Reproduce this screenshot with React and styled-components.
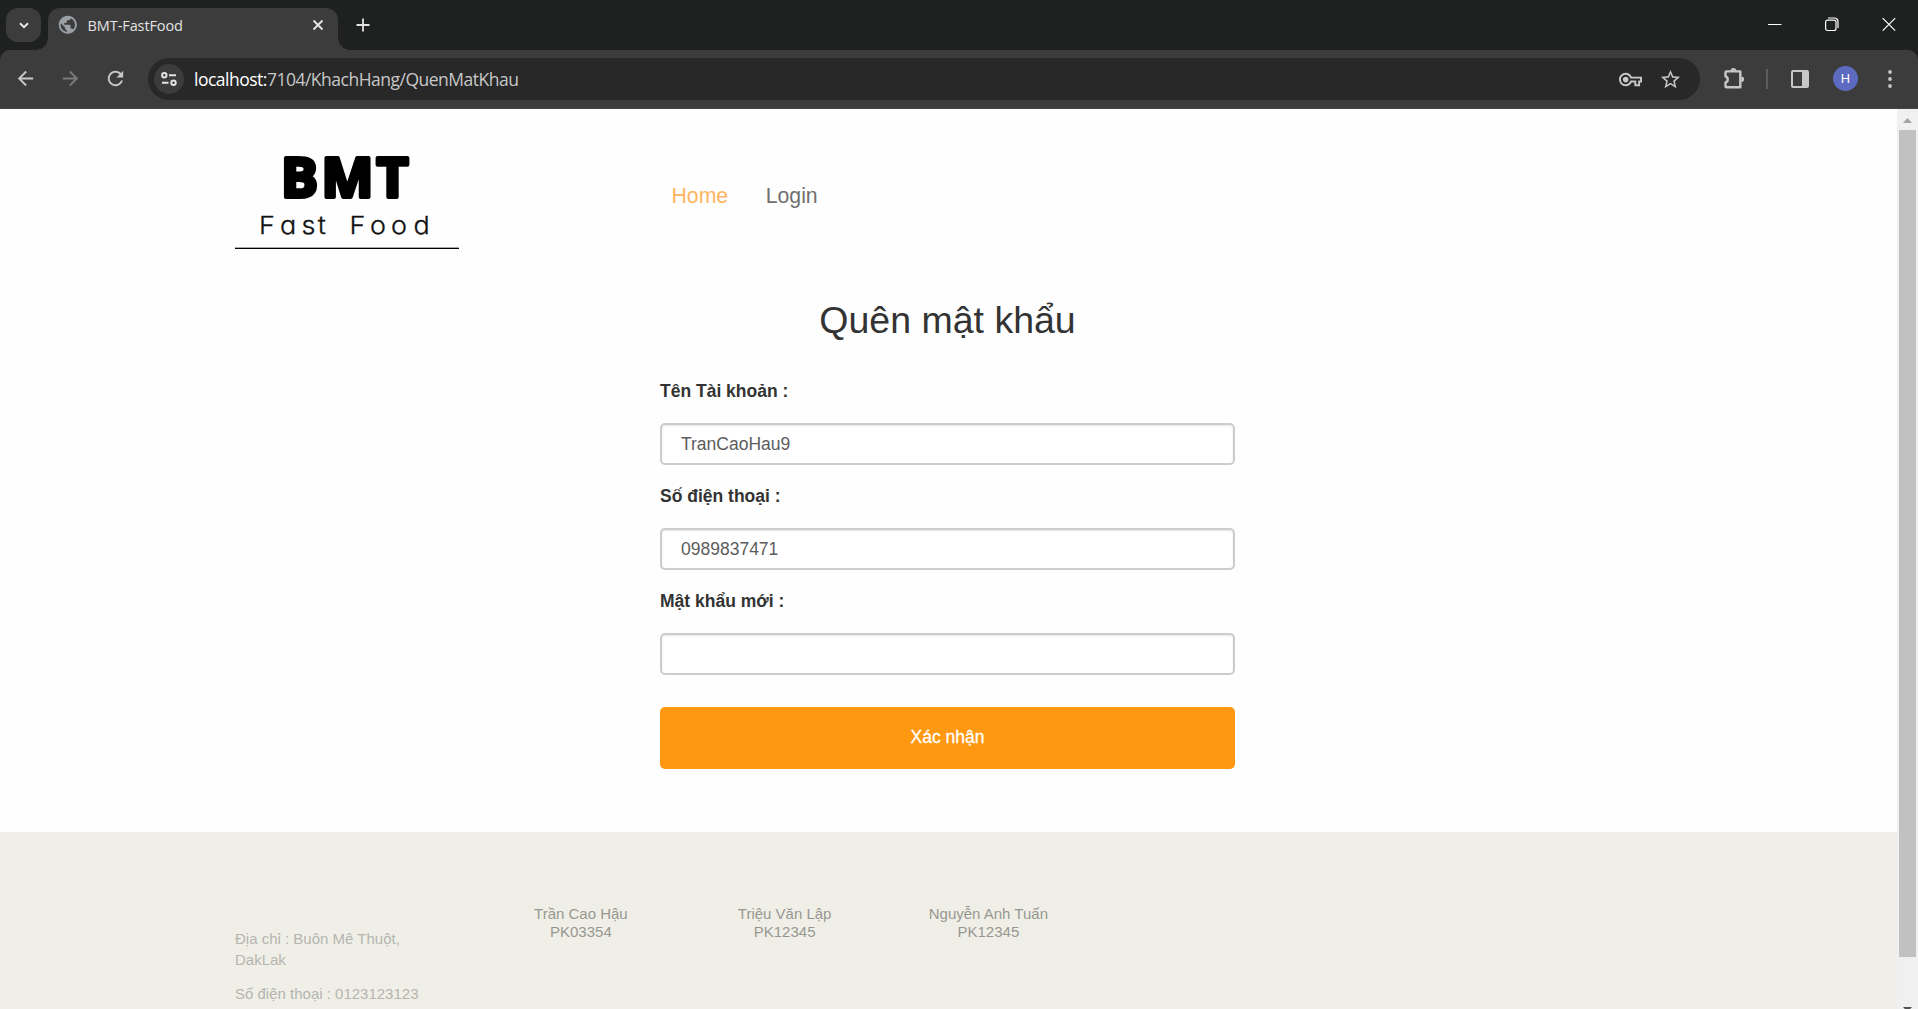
import React from "react";
import styled, { createGlobalStyle } from "styled-components";

const GlobalStyle = createGlobalStyle`
  * { box-sizing: border-box; }
  html, body { margin: 0; padding: 0; overflow: hidden; }
  body { background: #fff; }
`;

const Window = styled.div`
  display: flex;
  flex-direction: column;
  width: 1918px;
  height: 1009px;
  overflow: hidden;
  font-family: "Liberation Sans", Arial, sans-serif;
`;

const TabStrip = styled.div`
  display: flex;
  flex: none;
  height: 50px;
  padding: 8px 0 0 6px;
  background: #1f2120;
  color: #e3e3e3;
`;

const TabSearch = styled.button`
  display: flex;
  align-items: center;
  justify-content: center;
  width: 35px;
  height: 34px;
  margin: 0 7px 0 0;
  padding: 0;
  border: 0;
  border-radius: 12px;
  background: #3c3c3c;
  color: #e8e8e8;
`;

const Tab = styled.div`
  position: relative;
  display: flex;
  align-items: center;
  width: 290px;
  height: 42px;
  padding: 0 13px 8px 9px;
  border-radius: 12px 12px 0 0;
  background: #3c3c3c;
  &::before,
  &::after {
    content: "";
    position: absolute;
    bottom: 0;
    width: 12px;
    height: 12px;
  }
  &::before {
    left: -12px;
    background: radial-gradient(circle at 0 0, transparent 11.5px, #3c3c3c 12px);
  }
  &::after {
    right: -12px;
    background: radial-gradient(circle at 100% 0, transparent 11.5px, #3c3c3c 12px);
  }
`;

const TabTitle = styled.span`
  flex: 1;
  margin-left: 9px;
  padding-top: 1px;
  font: 14.5px/20px "Open Sans", sans-serif;
  letter-spacing: -0.1px;
  color: #e3e3e3;
`;

const NewTab = styled.div`
  display: flex;
  width: 14px;
  margin: 10px 0 0 18px;
`;

const WindowControls = styled.div`
  display: flex;
  gap: 43px;
  margin: 9px 22px 0 auto;
  color: #fff;
`;

const ToolbarBack = styled.div`
  flex: none;
  background: #1f2120;
`;

const Toolbar = styled.div`
  display: flex;
  align-items: center;
  height: 59px;
  padding: 0 16px 1px 14px;
  border-radius: 10px 10px 0 0;
  border-bottom: 1px solid #474444;
  background: #3c3c3c;
  color: #c7c7c7;
`;

const NavButtons = styled.div`
  display: flex;
  gap: 22px;
  width: 134px;
`;

const AddressBar = styled.div`
  display: flex;
  align-items: center;
  width: 1552px;
  height: 42px;
  padding: 0 18px 0 6px;
  border-radius: 21px;
  background: #282828;
`;

const SiteInfo = styled.div`
  display: flex;
  align-items: center;
  justify-content: center;
  width: 30px;
  height: 30px;
  border-radius: 50%;
  background: #3c3c3c;
  color: #e3e3e3;
`;

const Url = styled.div`
  flex: 1;
  margin-left: 10px;
  padding-top: 1px;
  font: 17.5px/24px "Open Sans", sans-serif;
  letter-spacing: -0.5px;
  color: #c7c7c7;
  b { font-weight: 400; color: #fff; }
`;

const AddressIcons = styled.div`
  display: flex;
  align-items: center;
  gap: 17px;
  padding-top: 1px;
`;

const ToolbarActions = styled.div`
  display: flex;
  flex: 1;
  align-items: center;
  padding-left: 22px;
`;

const Divider = styled.i`
  width: 2px;
  height: 20px;
  margin: 0 23px 0 20px;
  background: #5c5d5e;
`;

const Avatar = styled.div`
  width: 25px;
  height: 25px;
  margin: 0 30px 0 24px;
  border-radius: 50%;
  background: #5c6bc0;
  font: 13px/25px Roboto, sans-serif;
  text-align: center;
  color: #fff;
`;

const Viewport = styled.div`
  display: flex;
  flex: 1;
  min-height: 0;
`;

const Page = styled.div`
  display: flex;
  flex-direction: column;
  width: 1897px;
  background: #fefefe;
`;

const Header = styled.header`
  display: flex;
  flex: none;
  height: 181px;
  padding: 30px 0 0 235px;
`;

const Logo = styled.a`
  width: 224px;
  height: 110px;
  border-bottom: 1px solid #000;
  box-shadow: inset 0 -1px #a9a9a9;
  svg { display: block; }
`;

const Nav = styled.nav`
  display: flex;
  gap: 37.5px;
  padding: 44px 0 0 212.5px;
`;

const NavLink = styled.a`
  font-size: 21.25px;
  line-height: 26px;
  color: ${(p) => (p.$active ? "#ffb560" : "#70706e")};
`;

const Form = styled.form`
  display: flex;
  flex: none;
  flex-direction: column;
  width: 575px;
  height: 542px;
  margin-left: 660px;
`;

const Title = styled.h2`
  margin: 9px 0 38px;
  font-size: 37.5px;
  line-height: 42px;
  font-weight: 400;
  text-align: center;
  color: #333;
`;

const Field = styled.label`
  display: flex;
  flex-direction: column;
  height: 105px;
`;

const FieldName = styled.span`
  height: 44px;
  padding-top: 2px;
  font-size: 17.5px;
  line-height: 20px;
  font-weight: 700;
  color: #333;
`;

const Input = styled.input`
  width: 100%;
  height: 42px;
  padding: 0 19px;
  border: 2px solid #ccc;
  border-radius: 5px;
  outline: 0;
  background: #fff;
  box-shadow: inset 0 1px 2px rgba(0, 0, 0, 0.1);
  font: 17.5px/24px "Liberation Sans", Arial, sans-serif;
  color: #5c5c5c;
`;

const Submit = styled.button`
  height: 62px;
  margin-top: 13px;
  padding: 0 0 2px;
  border: 0;
  border-radius: 5px;
  background: #ff9811;
  font: 17.5px/24px "Liberation Sans", Arial, sans-serif;
  -webkit-text-stroke: 0.3px #fff;
  color: #fff;
`;

const Footer = styled.footer`
  display: flex;
  flex: 1;
  padding: 73px 0 0 235px;
  background: #f0efe7;
  font-size: 15px;
`;

const Contact = styled.address`
  width: 244px;
  padding-top: 23px;
  font-style: normal;
  line-height: 21px;
  color: #b5b5b0;
  p { width: 190px; margin: 0 0 13px; }
`;

const Member = styled.div`
  width: 203.75px;
  line-height: 18px;
  text-align: center;
  color: #979791;
`;

const Scrollbar = styled.div`
  display: flex;
  flex-direction: column;
  align-items: center;
  width: 21px;
  background: #f0f0f0;
`;

const Thumb = styled.div`
  flex: none;
  width: 17px;
  height: 827px;
  margin: 7px 0 50px;
  background: #c1c1c1;
`;

const Arrow = styled.svg`
  flex: none;
  display: block;
  margin-top: ${(p) => p.$top || 0}px;
`;

const Svg = styled.svg`
  flex: none;
  display: block;
`;

const Glyph = ({ size, d, color = "currentColor" }) => (
  <Svg width={size} height={size} viewBox="0 0 24 24" fill={color}>
    <path d={d} />
  </Svg>
);

const paths = {
  back: "M20 11H7.83l5.59-5.59L12 4l-8 8 8 8 1.41-1.41L7.83 13H20v-2z",
  forward: "M12 4l-1.41 1.41L16.17 11H4v2h12.17l-5.58 5.59L12 20l8-8z",
  reload:
    "M17.65 6.35C16.2 4.9 14.21 4 12 4c-4.42 0-7.99 3.58-7.99 8s3.57 8 7.99 8c3.73 0 6.84-2.55 7.73-6h-2.08c-.82 2.33-3.04 4-5.65 4-3.31 0-6-2.69-6-6s2.69-6 6-6c1.66 0 3.14.69 4.22 1.78L13 11h7V4l-2.35 2.35z",
  globe:
    "M12 2C6.48 2 2 6.48 2 12s4.48 10 10 10 10-4.48 10-10S17.52 2 12 2zm-1 17.93c-3.95-.49-7-3.85-7-7.93 0-.62.08-1.21.21-1.79L9 15v1c0 1.1.9 2 2 2v1.93zm6.9-2.54c-.26-.81-1-1.39-1.9-1.39h-1v-3c0-.55-.45-1-1-1H8v-2h2c.55 0 1-.45 1-1V7h2c1.1 0 2-.9 2-2v-.41c2.93 1.19 5 4.06 5 7.41 0 2.08-.8 3.97-2.1 5.39z",
  key: "M22 19h-6v-4h-2.68c-1.14 2.42-3.6 4-6.32 4-3.86 0-7-3.14-7-7s3.14-7 7-7c2.72 0 5.17 1.58 6.32 4H24v6h-2v4zm-4-2h2v-4h2v-2H11.94l-.23-.67C11.01 8.34 9.11 7 7 7c-2.76 0-5 2.24-5 5s2.24 5 5 5c2.11 0 4.01-1.34 4.71-3.33l.23-.67H18v4zM7 15c-1.65 0-3-1.35-3-3s1.35-3 3-3 3 1.35 3 3-1.35 3-3 3z",
  star: "M22 9.24l-7.19-.62L12 2 9.19 8.63 2 9.24l5.46 4.73L5.82 21 12 17.27 18.18 21l-1.63-7.03L22 9.24zM12 15.4l-3.76 2.27 1-4.28-3.32-2.88 4.38-.38L12 6.1l1.71 4.04 4.38.38-3.32 2.88 1 4.28L12 15.4z",
};

const Mark = ({ w, h, children, sw = 2 }) => (
  <Svg width={w} height={h} viewBox={`0 0 ${w} ${h}`} fill="none" stroke="currentColor" strokeWidth={sw}>
    {children}
  </Svg>
);

const brand = [
  ["B", 281, 37],
  ["M", 321.5, 52],
  ["T", 376.5, 32],
];

const BrandLogo = () => (
  <svg width="224" height="108" viewBox="235 139 224 108">
    <g fontFamily="Open Sans, sans-serif" fontWeight="700" fontSize="54.5" fill="#000" stroke="#000" strokeWidth="4" strokeLinejoin="round">
      {brand.map(([ch, x, w]) => (
        <text key={ch} x={x} y="197" textLength={w} lengthAdjust="spacingAndGlyphs">{ch}</text>
      ))}
    </g>
    <text
      transform="translate(259 234) scale(1.1 1)"
      x="0 19.1 38.6 53.5 68 82.3 101 120 140.500"
      y="0"
      fontFamily="Inter, sans-serif"
      fontWeight="300"
      fontSize="24.500"
      fill="#111"
      stroke="#111"
      strokeWidth=".3"
      style={{ fontFeatureSettings: '"cv11"' }}
    >
      Fast Food
    </text>
  </svg>
);

const members = [
  ["Trần Cao Hậu", "PK03354"],
  ["Triệu Văn Lập", "PK12345"],
  ["Nguyễn Anh Tuấn", "PK12345"],
];

export default function App() {
  return (
    <Window>
      <GlobalStyle />
      <TabStrip>
        <TabSearch>
          <Mark w={10} h={7}><path d="M1 1.2l4 4 4-4" /></Mark>
        </TabSearch>
        <Tab>
          <Glyph size={21.6} d={paths.globe} color="#9aa0a6" />
          <TabTitle>BMT-FastFood</TabTitle>
          <Mark w={14} h={14} sw={1.9}><path d="M2.5 2.5l9 9M11.5 2.5l-9 9" /></Mark>
        </Tab>
        <NewTab>
          <Mark w={14} h={14} sw={1.8}><path d="M7 .5v13M.5 7h13" /></Mark>
        </NewTab>
        <WindowControls>
          <Mark w={14} h={14} sw={1}><path d="M0 7.5h13.5" /></Mark>
          <Mark w={14} h={15} sw={1.2}>
            <rect x=".6" y="3.1" width="10.4" height="10.4" rx="2" />
            <path d="M3 1h6.5a3.5 3.5 0 0 1 3.5 3.5V11" />
          </Mark>
          <Mark w={14} h={15} sw={1.2}><path d="M.7 1.2l12.5 12.5M13.2 1.2L.7 13.7" /></Mark>
        </WindowControls>
      </TabStrip>
      <ToolbarBack>
        <Toolbar>
          <NavButtons>
            <Glyph size={23} d={paths.back} />
            <Glyph size={23} d={paths.forward} color="#7a7a7a" />
            <Glyph size={23} d={paths.reload} />
          </NavButtons>
          <AddressBar>
            <SiteInfo>
              <Mark w={16} h={14}>
                <circle cx="3.3" cy="3.3" r="2.2" />
                <path d="M8 3.3h7M1 10.7h6.5" />
                <circle cx="12.5" cy="10.7" r="2.2" />
              </Mark>
            </SiteInfo>
            <Url><b>localhost:</b>7104/KhachHang/QuenMatKhau</Url>
            <AddressIcons>
              <Glyph size={23} d={paths.key} />
              <Glyph size={23} d={paths.star} />
            </AddressIcons>
          </AddressBar>
          <ToolbarActions>
            <Mark w={24} h={24} sw={2.4}>
              <path d="M4.5 4.400H18.300V20.200H4.500a1 1 0 0 1-1-1v-3.900a3 3 0 0 0 0-5.800V5.400a1 1 0 0 1 1-1" strokeLinejoin="round" />
              <path d="M8.500 3.800a2.900 2.900 0 0 1 5.800 0zM19.300 9.500a2.800 2.800 0 0 1 0 5.600z" fill="currentColor" stroke="none" />
            </Mark>
            <Divider />
            <Mark w={18} h={18}>
              <rect x="1" y="1" width="16" height="16" rx="1" />
              <path d="M11 1h6v16h-6z" fill="currentColor" stroke="none" />
            </Mark>
            <Avatar>H</Avatar>
            <Mark w={4} h={18}>
              <g fill="currentColor" stroke="none">
                <circle cx="2" cy="2" r="1.9" />
                <circle cx="2" cy="9" r="1.9" />
                <circle cx="2" cy="16" r="1.9" />
              </g>
            </Mark>
          </ToolbarActions>
        </Toolbar>
      </ToolbarBack>
      <Viewport>
        <Page>
          <Header>
            <Logo><BrandLogo /></Logo>
            <Nav>
              <NavLink $active>Home</NavLink>
              <NavLink>Login</NavLink>
            </Nav>
          </Header>
          <Form>
            <Title>Quên mật khẩu</Title>
            <Field>
              <FieldName>Tên Tài khoản :</FieldName>
              <Input defaultValue="TranCaoHau9" />
            </Field>
            <Field>
              <FieldName>Số điện thoại :</FieldName>
              <Input defaultValue="0989837471" />
            </Field>
            <Field>
              <FieldName>Mật khẩu mới :</FieldName>
              <Input defaultValue="" />
            </Field>
            <Submit type="button">Xác nhận</Submit>
          </Form>
          <Footer>
            <Contact>
              <p>Địa chỉ : Buôn Mê Thuột, DakLak</p>
              <p>Số điện thoại : 0123123123</p>
            </Contact>
            {members.map(([name, id]) => (
              <Member key={name}>
                <div>{name}</div>
                <div>{id}</div>
              </Member>
            ))}
          </Footer>
        </Page>
        <Scrollbar>
          <Arrow $top={9} width="9" height="5"><path d="M4.5 0L9 5H0z" fill="#a3a3a3" /></Arrow>
          <Thumb />
          <Arrow width="9" height="5"><path d="M4.5 5L9 0H0z" fill="#505050" /></Arrow>
        </Scrollbar>
      </Viewport>
    </Window>
  );
}
